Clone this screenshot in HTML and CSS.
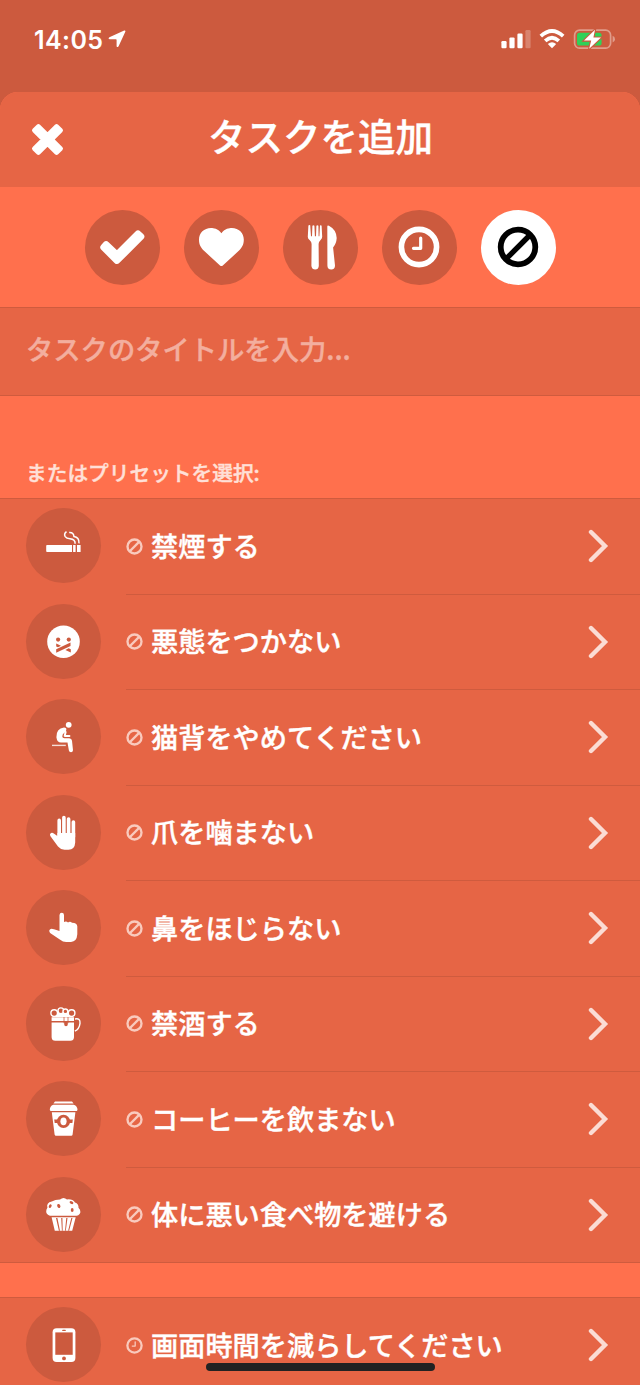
FILE: index.html
```
<!DOCTYPE html>
<html lang="ja">
<head>
    <meta charset="UTF-8">
    <meta name="viewport" content="width=device-width, initial-scale=1.0">
    <title>タスクを追加</title>
    <link rel="stylesheet" href="styles.css">
</head>
<body>
    <!-- Icônes partagées -->
    <svg class="sprite" aria-hidden="true">
        <symbol id="ban" viewBox="0 0 42 42">
            <circle cx="21" cy="21" r="17.3" fill="none" stroke="currentColor" stroke-width="5.8"/>
            <path d="M9 33L33 9" stroke="currentColor" stroke-width="5.4"/>
        </symbol>
        <symbol id="clock" viewBox="0 0 42 42">
            <circle cx="21" cy="21" r="17.6" fill="none" stroke="currentColor" stroke-width="5.6"/>
            <path d="M22.7 12V22.3H15.5" fill="none" stroke="currentColor" stroke-width="3.2" stroke-linecap="round" stroke-linejoin="round"/>
        </symbol>
        <symbol id="chevron" viewBox="0 0 22 34">
            <path d="M4 3L18 17L4 31" fill="none" stroke="currentColor" stroke-width="4.4" stroke-linecap="round"/>
        </symbol>
    </svg>

    <div class="status-bar">
        <div class="status-time">
            <span>14:05</span>
            <svg class="location" viewBox="0 0 18 18"><path d="M16.2 .6Q17.8 .2 17.3 1.8L10.6 16.2Q9.2 18 8.6 16.2V9.9Q8.6 9.3 8 9.3H1.6Q-.5 8.6 1.4 7.2Z"/></svg>
        </div>
        <div class="status-icons">
            <svg class="signal" viewBox="0 0 30 20">
                <rect x="0.4" y="12" width="5.2" height="7.2" rx="1.2"/>
                <rect x="8.4" y="8.4" width="5.2" height="10.8" rx="1.2"/>
                <rect x="16.4" y="4.6" width="5.2" height="14.6" rx="1.2"/>
                <rect x="24.4" y="1" width="5.2" height="18.2" rx="1.2" opacity=".25"/>
            </svg>
            <svg class="wifi" viewBox="0 0 26 20">
                <path d="M1.8 7.2Q13-3 24.2 7.2M6.2 11.8Q13 5.6 19.8 11.8" fill="none" stroke="#fff" stroke-width="3.8"/>
                <path d="M8.8 15Q13 11.4 17.2 15L13 19.2Z"/>
            </svg>
            <svg class="battery" viewBox="0 0 43 22">
                <rect x="1.6" y="2.2" width="36" height="18" rx="5" fill="none" stroke="#fff" stroke-width="1.7" opacity=".4"/>
                <path d="M39.6 7.8Q42 8.7 42 11.2T39.6 14.6Z" opacity=".4"/>
                <rect x="4" y="4.8" width="24.6" height="12.8" rx="2.6" fill="#30d158"/>
                <path d="M22 1.8L11 12.6H18.2L16.2 20.8L28 9.6H20.4Z" stroke="#cc5a3e" stroke-width="2.2" paint-order="stroke"/>
            </svg>
        </div>
    </div>

    <div class="sheet">
        <div class="header">
            <svg class="close" viewBox="0 0 32 32"><path d="M16 12L24.8 3.2L28.8 7.2L20 16L28.8 24.8L24.8 28.8L16 20L7.2 28.8L3.2 24.8L12 16L3.2 7.2L7.2 3.2Z" stroke="#fff" stroke-width="4.4" stroke-linejoin="round"/></svg>
            <h1>タスクを追加</h1>
        </div>

        <div class="types">
            <div class="circle">
                <svg viewBox="0 0 75 75"><path d="M18.8 37.3L21.2 34.7L32 45L53 24L55.8 26.6L32 50.4Z" stroke="#fff" stroke-width="7" stroke-linejoin="round"/></svg>
            </div>
            <div class="circle">
                <svg viewBox="0 0 75 75"><path d="M37.4 23.2C33.5 18.4 29.8 18 27 18C20 18 15 23 15 29.5C15 35 17 37.8 20 40.8L36 55.5Q37.4 56.7 38.8 55.5L54.8 40.8C57.8 37.8 59.8 35 59.8 29.5C59.8 23 54.8 18 47.8 18C45 18 41.3 18.4 37.4 23.2Z"/></svg>
            </div>
            <div class="circle">
                <svg viewBox="0 0 75 75">
                    <path d="M25.4 15.6Q26 14.8 27.2 15.3L28 26.3H29L29.4 15.8Q30.4 14.6 31.4 15.8L31.9 26.3H33L33.4 15.8Q34.4 14.6 35.4 15.8L35.6 26.3H36.4L37 15.6Q38.2 14.7 38.6 15.8L39.2 26.8Q39.2 28.6 37.4 30.3Q35.6 31.8 35.6 34L35.8 56Q35.4 59.6 32.2 59.6T28.4 56L28.6 34Q28.6 31.8 26.8 30.3Q24.7 28.6 24.8 26.8Z"/>
                    <path d="M44.3 16.4Q44.3 15 45.9 15.7Q53.4 19.6 53.7 28Q53.4 33.6 50.1 37.5L52 55.4Q52 59.5 48.2 59.5T44.4 55.6Z"/>
                </svg>
            </div>
            <div class="circle"><svg class="type-icon"><use href="#clock"/></svg></div>
            <div class="circle selected"><svg class="type-icon"><use href="#ban"/></svg></div>
        </div>

        <div class="title-field">タスクのタイトルを入力...</div>
        <div class="presets-label">またはプリセットを選択:</div>

        <div class="list">
            <div class="row">
                <div class="circle">
                    <svg viewBox="0 0 75 75">
                        <path d="M21 37H46V44H21Q20.2 44 20.2 43V38Q20.2 37 21 37ZM47.1 37H49.6V44H47.1ZM51 37H54.6V44H51Z"/>
                        <path d="M40.5 23.7Q37.6 25.8 39.2 28.7Q40.5 30.6 44 30.8Q49.4 31.4 49.1 35.7M43.2 24.6Q47.6 24.3 48 28.6Q53.3 29.4 53 35.4" fill="none" stroke="#fff" stroke-width="1.5"/>
                    </svg>
                </div>
                <div class="row-body"><svg class="badge"><use href="#ban"/></svg><span>禁煙する</span><svg class="chevron"><use href="#chevron"/></svg></div>
            </div>
            <div class="row">
                <div class="circle">
                    <svg viewBox="0 0 75 75">
                        <circle cx="37.5" cy="37.7" r="16.3"/>
                        <g class="cut"><circle cx="32.1" cy="35.6" r="2.1"/><circle cx="42.8" cy="35.6" r="2.1"/><path d="M30.2 45.3L44.5 38.4V42L30.2 48.8Z"/><path d="M30.2 39.4L35 41.8L32 43.2L30.2 42.5ZM44.8 48.4L39.4 46.1L42.6 44.3L44.8 45.2Z"/></g>
                    </svg>
                </div>
                <div class="row-body"><svg class="badge"><use href="#ban"/></svg><span>悪態をつかない</span><svg class="chevron"><use href="#chevron"/></svg></div>
            </div>
            <div class="row">
                <div class="circle">
                    <svg viewBox="0 0 75 75">
                        <circle cx="42.7" cy="25.8" r="2.9"/>
                        <path d="M38 28.4Q41 28.5 40.2 31.2Q39.7 33 38 34.1Q36.2 35.6 36.3 37.5Q36.4 39.2 38.3 39.2H43.3Q45.7 39.4 46 41.7L47 51.3Q46.8 53.2 45 53.2T42.9 51.5L41.5 43.5H35.2Q31 43.6 30.4 38.3Q30.1 29.3 38 28.4Z"/>
                        <path d="M39.6 33L38.7 36.9H43.4" fill="none" stroke="#fff" stroke-width="2" stroke-linecap="round" stroke-linejoin="round"/>
                        <path d="M26 46.4H39.8" stroke="#fff" stroke-width="1.4" opacity=".8"/>
                    </svg>
                </div>
                <div class="row-body"><svg class="badge"><use href="#ban"/></svg><span>猫背をやめてください</span><svg class="chevron"><use href="#chevron"/></svg></div>
            </div>
            <div class="row">
                <div class="circle">
                    <svg viewBox="0 0 75 75">
                        <path d="M33.2 25.4V42M37.9 22.6V42M42.6 24V42M47.4 27V42" stroke="#fff" stroke-width="3.6" stroke-linecap="round"/>
                        <path d="M31.4 38H49.2V47.5Q48.8 54.7 42.5 54.7H38.5Q34.7 54.6 32 51.4L24.3 41.1Q23.3 39.2 25 38Q26.4 37.3 27.8 38.4L31.4 41Z"/>
                    </svg>
                </div>
                <div class="row-body"><svg class="badge"><use href="#ban"/></svg><span>爪を噛まない</span><svg class="chevron"><use href="#chevron"/></svg></div>
            </div>
            <div class="row">
                <div class="circle">
                    <svg viewBox="0 0 75 75"><path d="M33.5 24.9Q33.7 22.8 35.8 22.8T38 24.9V32Q40.3 31 42 32.4Q44.2 31.2 46 32.7Q51.3 32.7 51.3 36.5V44.3Q50.8 51.8 45 51.9H40.2Q37 51.9 33.8 49.4L24.1 42.9Q22.4 40.4 24.2 39.2Q25.2 38.5 28 39.3L33.5 41Z"/></svg>
                </div>
                <div class="row-body"><svg class="badge"><use href="#ban"/></svg><span>鼻をほじらない</span><svg class="chevron"><use href="#chevron"/></svg></div>
            </div>
            <div class="row">
                <div class="circle">
                    <svg viewBox="0 0 75 75">
                        <path d="M25.6 36.6H38.2V38.2Q38.2 40.2 40 40.2T41.8 38.2V36.6H48V51.2Q47.8 54.8 44.3 54.8H29.3Q25.8 54.8 25.6 51.2ZM25.6 31.2H48V35H25.6Z"/>
                        <path d="M26.4 31L28 27H46L47.2 31Z"/>
                        <g class="cut" stroke="#fff" stroke-width="1.4"><circle cx="34.9" cy="24.8" r="2.9"/><circle cx="39.4" cy="25.4" r="2.4"/><circle cx="28.2" cy="27.1" r="3.3"/><circle cx="45.6" cy="27.1" r="3.3"/></g>
                        <path d="M38 31V37.2M42 31V37.2" stroke="#cc5a3e" stroke-width=".8"/>
                        <path d="M49 33Q54.5 31.8 54 37.3Q53.3 43 48.8 45.2" fill="none" stroke="#fff" stroke-width="1.4"/>
                    </svg>
                </div>
                <div class="row-body"><svg class="badge"><use href="#ban"/></svg><span>禁酒する</span><svg class="chevron"><use href="#chevron"/></svg></div>
            </div>
            <div class="row">
                <div class="circle">
                    <svg viewBox="0 0 75 75">
                        <path d="M29 20.4H46L47.6 22.6H27.4ZM27.2 23.7H47.8Q51.5 25 51.5 29L50.8 30H24.5L23.8 29Q23.8 25 27.2 23.7ZM25.8 31.2H49.4L46.6 53.5Q46.4 54.8 45.2 54.8H30Q28.8 54.8 28.6 53.5Z"/>
                        <g class="cut"><circle cx="37.5" cy="40.3" r="6.6"/><path d="M28.2 38.4H46.8L46.4 42H28.7Z"/></g>
                        <ellipse cx="37.5" cy="40.3" rx="3.1" ry="3.9"/>
                    </svg>
                </div>
                <div class="row-body"><svg class="badge"><use href="#ban"/></svg><span>コーヒーを飲まない</span><svg class="chevron"><use href="#chevron"/></svg></div>
            </div>
            <div class="row">
                <div class="circle">
                    <svg viewBox="0 0 75 75">
                        <path d="M24 38.8Q20.2 37.6 20.2 34.5Q20.2 32.3 21.4 30.8Q20 25.5 25.8 24.4Q29 22.6 34 22.4Q37.6 19.4 41 22.4Q46.7 21.8 49 25.6Q52.8 27 52.5 30.8Q54.5 32.5 54.4 35Q54.2 37.7 50.7 38.8ZM25.6 40.2H49.7L46.2 53.8H28.8Z"/>
                        <g class="cut"><ellipse cx="24.2" cy="29.1" rx="1.3" ry="1.9" transform="rotate(30 24.2 29.1)"/><ellipse cx="32.8" cy="29" rx="1.5" ry="2.1" transform="rotate(-25 32.8 29)"/><ellipse cx="45.5" cy="25.6" rx="1.4" ry="2" transform="rotate(-60 45.5 25.6)"/><ellipse cx="46.2" cy="33" rx="1.4" ry="2"/><path d="M30 41L31.4 41L34 53.8H32.9ZM35.2 41H36.4L36.7 53.8H35.9ZM40.3 41H41.5L39.8 53.8H39ZM45.3 41H46.5L43.1 53.8H42.1Z"/></g>
                    </svg>
                </div>
                <div class="row-body"><svg class="badge"><use href="#ban"/></svg><span>体に悪い食べ物を避ける</span><svg class="chevron"><use href="#chevron"/></svg></div>
            </div>
        </div>

        <div class="list">
            <div class="row">
                <div class="circle">
                    <svg viewBox="0 0 75 75">
                        <rect x="26.6" y="21.2" width="22.8" height="33.8" rx="4"/>
                        <g class="cut"><rect x="29.3" y="25.4" width="17.4" height="22.4"/><circle cx="38" cy="51.4" r="1.9"/><rect x="36.2" y="22.7" width="3.6" height="1.3" rx=".6"/></g>
                    </svg>
                </div>
                <div class="row-body"><svg class="badge"><use href="#clock"/></svg><span>画面時間を減らしてください</span><svg class="chevron"><use href="#chevron"/></svg></div>
            </div>
        </div>
    </div>

    <div class="home-indicator"></div>
</body>
</html>
```
FILE: styles.css
```
body {
    margin: 0;
    height: 1385px;
    overflow: hidden;
    position: relative;
    background-color: #cc5a3e;
    color: #fff;
    font-family: "Noto Sans CJK JP", sans-serif;
    font-weight: 500;
    -webkit-text-stroke: 0.4px;
}
svg {
    display: block;
    flex-shrink: 0;
    fill: #fff;
}
.sprite {
    position: absolute;
    width: 0;
    height: 0;
}
.status-bar {
    display: flex;
    justify-content: space-between;
    box-sizing: border-box;
    height: 92px;
    padding: 28px 24px 0 34px;
}
.status-time {
    display: flex;
    gap: 5px;
    height: 23px;
    font-family: Inter, sans-serif;
    font-size: 25px;
    font-weight: 600;
    line-height: 24px;
    letter-spacing: 0.4px;
    -webkit-text-stroke: 0;
}
.location {
    width: 18px;
    height: 18px;
    margin-top: 2px;
}
.status-icons {
    display: flex;
}
.signal {
    width: 30px;
    height: 20px;
    margin: 1px 8px 0 0;
}
.wifi {
    width: 26px;
    height: 20px;
    margin: 1px 8px 0 0;
}
.battery {
    width: 43px;
    height: 22px;
}
.sheet {
    background-color: #ff704d;
    border-radius: 18px 18px 0 0;
}
.header {
    display: grid;
    grid-template-columns: 32px 1fr 32px;
    align-items: center;
    height: 95px;
    padding: 0 31px;
    background-color: #e66545;
    border-radius: 18px 18px 0 0;
}
.close {
    width: 33px;
    height: 33px;
}
h1 {
    margin: 0 0 9px 1px;
    font-size: 37.5px;
    font-weight: 500;
    line-height: 50px;
    text-align: center;
}
.types {
    display: flex;
    justify-content: center;
    align-items: center;
    gap: 24px;
    height: 120px;
}
.circle {
    display: flex;
    justify-content: center;
    align-items: center;
    flex-shrink: 0;
    width: 75px;
    height: 75px;
    border-radius: 50%;
    background-color: #cc5a3e;
}
.circle.selected {
    background-color: #fff;
    color: #000;
}
.circle .type-icon {
    width: 42px;
    height: 42px;
}
.title-field {
    box-sizing: border-box;
    height: 89px;
    padding: 0 26px;
    border-top: 1px solid #cf5b3e;
    border-bottom: 1px solid #cf5b3e;
    background-color: #e66545;
    color: #f3ae9e;
    font-size: 27.3px;
    line-height: 81px;
}
.presets-label {
    box-sizing: border-box;
    height: 102px;
    padding: 61px 26px 0;
    color: #ffe0d8;
    font-size: 20.7px;
    line-height: 30px;
}
.list {
    margin-bottom: 34px;
    border-bottom: 1px solid #cf5b3e;
    background-color: #e66545;
}
.row {
    display: flex;
    align-items: center;
    gap: 25px;
    height: 95.5px;
    padding-left: 26px;
}
.list .row:first-child {
    box-shadow: inset 0 1px #cf5b3e;
}
.row-body {
    display: flex;
    align-items: center;
    flex: 1;
    box-sizing: border-box;
    height: 100%;
    padding-right: 31px;
    border-top: 1px solid #cf5b3e;
    font-size: 27.2px;
    line-height: 40px;
}
.badge {
    width: 17px;
    height: 17px;
    margin-right: 8px;
    color: #f9cabd;
}
.row-body span {
    flex: 1;
    padding-bottom: 3px;
}
.chevron {
    width: 22px;
    height: 34px;
    color: #fbdcd4;
}
.cut {
    fill: #cc5a3e;
}
.home-indicator {
    position: absolute;
    left: 206px;
    top: 1363px;
    width: 229px;
    height: 8px;
    border-radius: 4px;
    background-color: #222;
}
```
